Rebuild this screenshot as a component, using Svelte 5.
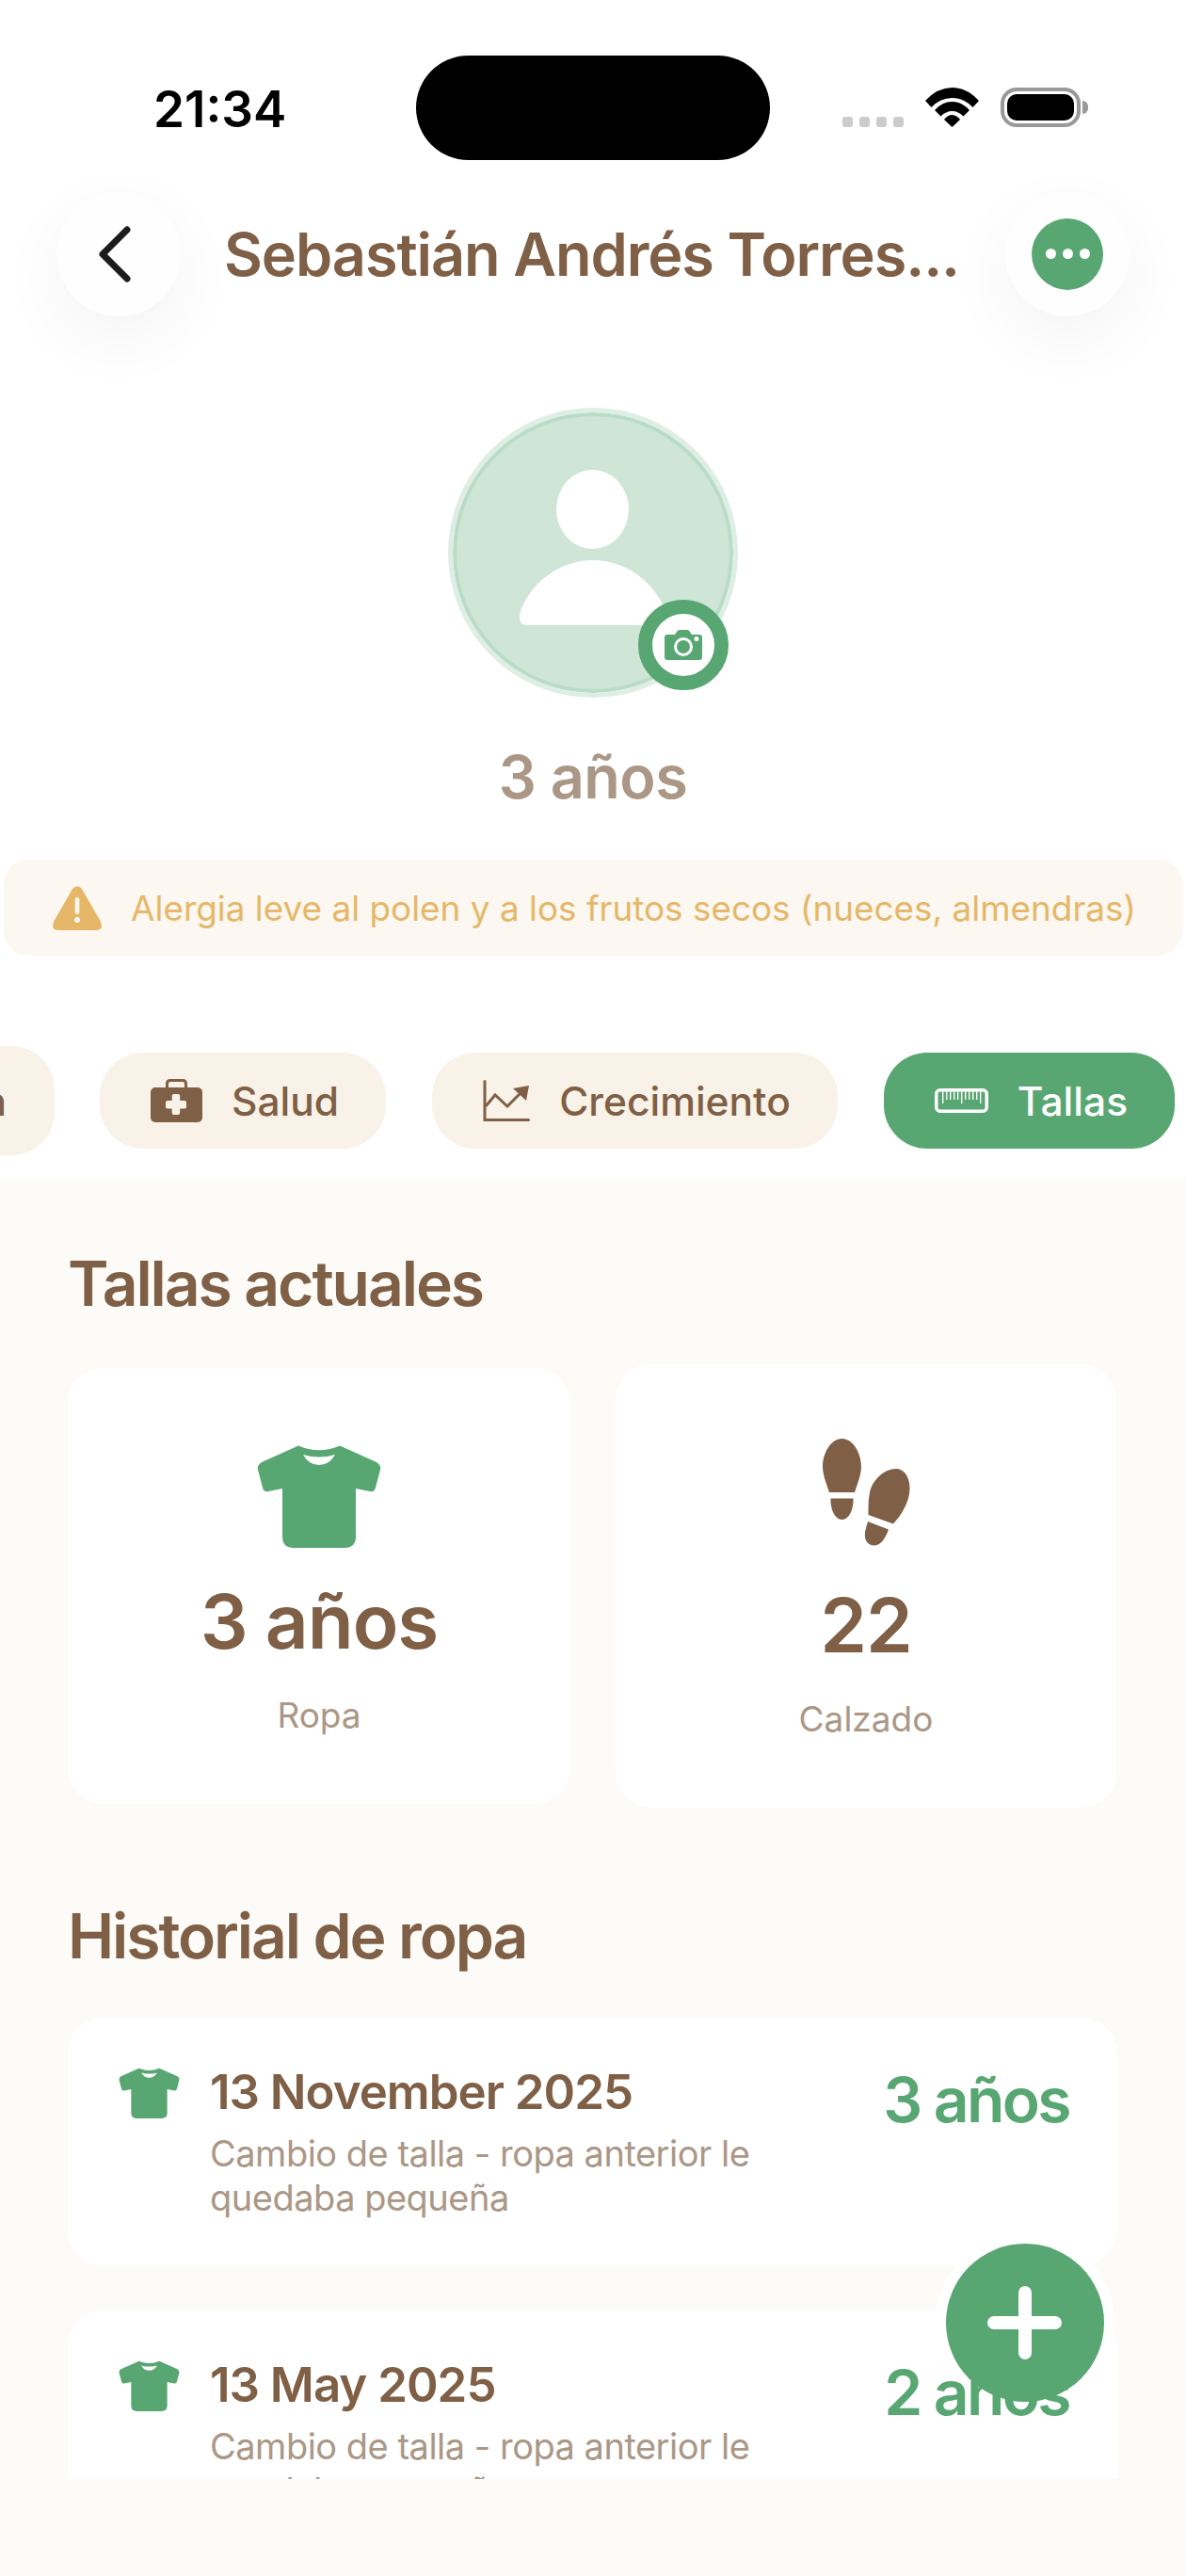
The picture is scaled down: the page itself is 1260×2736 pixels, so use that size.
<script>
    const tabs = [
        { label: 'Salud', icon: 'salud' },
        { label: 'Crecimiento', icon: 'chart' },
        { label: 'Tallas', icon: 'ruler', active: true }
    ];

    const history = [
        { date: '13 November 2025', note: 'Cambio de talla - ropa anterior le quedaba pequeña', size: '3 años' },
        { date: '13 May 2025', note: 'Cambio de talla - ropa anterior le quedaba pequeña', size: '2 años' }
    ];

    const ticks = [0, 1, 2, 3, 4, 5, 6, 7, 8, 9, 10];
</script>

{#snippet shirt(w, h)}
    <svg class="shirt" width={w} height={h} viewBox="33 20 132 112">
        <path fill="#58a672" d="M77 23.500Q99 33 121 23.500L160 41Q165 44 164 49L159 68Q158 73 153 72L138 69V120Q138 132 126 132H72Q60 132 60 120V69L45 72Q40 73 39 68L34 49Q33 44 38 41Z" />
        <path fill="#fff" d="M82 33Q99 38 116 33Q110 44 99 44Q88 44 82 33Z" />
    </svg>
{/snippet}

<main>
    <header class="status">
        <span class="time">21:34</span>
        <div class="island"></div>
        <div class="indicators">
            <div class="signal"><i></i><i></i><i></i><i></i></div>
            <svg class="wifi" width="57" height="42" viewBox="0 0 57 42">
                <path d="M0 14Q13 0 28.500 0Q44 0 57 14L50.500 21Q41 11 28.500 11Q16 11 6.500 21Z" />
                <path d="M10 24Q18 15 28.500 15Q39 15 47 24L40.500 30.500Q35 25 28.500 25Q22 25 16.500 30.500Z" />
                <path d="M20 34Q24 29 28.500 29Q33 29 37 34L28.500 42Z" />
            </svg>
            <div class="battery"><div class="level"></div></div>
            <div class="nub"></div>
        </div>
    </header>

    <nav class="topbar">
        <button class="round" aria-label="Volver">
            <svg width="36" height="60" viewBox="0 0 36 60">
                <path d="M32 4 6 30l26 26" fill="none" stroke="#1c1c1c" stroke-width="7" stroke-linecap="round" stroke-linejoin="round" />
            </svg>
        </button>
        <h1>Sebastián Andrés Torres...</h1>
        <button class="round" aria-label="Más">
            <span class="more"><i></i><i></i><i></i></span>
        </button>
    </nav>

    <section class="profile">
        <div class="avatar">
            <svg width="156" height="165" viewBox="0 0 156 165">
                <ellipse cx="77.500" cy="42" rx="38.500" ry="42" fill="#fff" />
                <path fill="#fff" d="M8 165Q0 165 0 157Q0 150 4 143C18 115 46 96 78 96C110 96 138 115 152 143Q156 150 156 157Q156 165 148 165Z" />
            </svg>
            <div class="badge">
                <svg width="40" height="32" viewBox="0 0 40 32">
                    <path fill="#58a672" fill-rule="evenodd" d="M3 5H11L13 2Q14 0 16 0H24Q26 0 27 2L29 5H37Q40 5 40 8V29Q40 32 37 32H3Q0 32 0 29V8Q0 5 3 5ZM20 8A10 10 0 1 0 20 28A10 10 0 1 0 20 8ZM20 11A7 7 0 1 1 20 25A7 7 0 1 1 20 11ZM34 7A2.500 2.500 0 1 0 34 12A2.500 2.500 0 1 0 34 7Z" />
                </svg>
            </div>
        </div>
        <p class="age">3 años</p>
    </section>

    <aside class="alert">
        <svg width="52" height="47" viewBox="0 0 52 47">
            <path fill="#e6b768" d="M21 3Q26 -2.500 31 3L50.500 37Q55 47 46 47H6Q-3 47 1.500 37Z" />
            <rect x="23.700" y="12" width="4.600" height="18" rx="2.300" fill="#fcf8f1" />
            <circle cx="26" cy="36" r="3" fill="#fcf8f1" />
        </svg>
        <span>Alergia leve al polen y a los frutos secos (nueces, almendras)</span>
    </aside>

    <div class="tabs">
        <div class="tab partial"><span>Información</span></div>
        {#each tabs as tab}
            <div class="tab" class:active={tab.active}>
                {#if tab.icon === 'salud'}
                    <svg width="55" height="46" viewBox="0 0 55 46">
                        <path fill="none" stroke="#7f5f45" stroke-width="3" d="M17.500 10V5Q17.500 1.500 21 1.500H34Q37.500 1.500 37.500 5V10" />
                        <rect y="9" width="55" height="37" rx="5" fill="#7f5f45" />
                        <rect x="16" y="23" width="22" height="8.500" rx="2" fill="#f9f2e8" />
                        <rect x="22.700" y="16" width="8.500" height="22" rx="2" fill="#f9f2e8" />
                    </svg>
                {:else if tab.icon === 'chart'}
                    <svg width="50" height="44" viewBox="0 0 50 44">
                        <path fill="none" stroke="#7f5f45" stroke-width="3" stroke-linecap="round" d="M2 1.500V42.500H48.500" />
                        <path fill="none" stroke="#7f5f45" stroke-width="3" d="M3 28 13 16 26 28 39 15" />
                        <path fill="#7f5f45" d="M32 9 49 6 46 22Z" />
                    </svg>
                {:else}
                    <svg width="57" height="26" viewBox="0 0 57 26">
                        <rect x="1.750" y="1.750" width="53.500" height="22.500" rx="4" fill="none" stroke="#fff" stroke-width="3.500" />
                        {#each ticks as t}
                            <rect x={8 + t * 4} y="3" width="1.400" height={t % 5 === 0 ? 13 : 9} fill="#fff" />
                        {/each}
                    </svg>
                {/if}
                <span>{tab.label}</span>
            </div>
        {/each}
    </div>

    <div class="content">
        <div class="scroll">
            <h2>Tallas actuales</h2>
            <div class="current">
                <div class="size-card ropa">
                    <div class="icon-box">{@render shirt(132, 112)}</div>
                    <strong>3 años</strong>
                    <span>Ropa</span>
                </div>
                <div class="size-card calzado">
                    <div class="icon-box">
                        <svg width="93" height="114" viewBox="35 20 93 114" fill="#7f5f45">
                            <path d="M55.500 20C44 20 35 35 35 50C35 58 39 68 42 77H69C72 68 76 58 76 50C76 35 67 20 55.500 20Z" />
                            <path d="M43.500 83.500H67.500C68 95 63 106 55.500 106C48 106 43 95 43.500 83.500Z" />
                            <path d="M83.500 101 110 110.500C118 102 127 88 127.500 74C128 62 122 52 113 52C100 52 88 64 85 77C83.500 85 83.500 93 83.500 101Z" />
                            <path d="M83 108 105 116.500C102 125 97 133.500 90 133.500C83 133.500 79 128 80 120C80.500 116 82 112 83 108Z" />
                        </svg>
                    </div>
                    <strong>22</strong>
                    <span>Calzado</span>
                </div>
            </div>

            <h2 class="second">Historial de ropa</h2>
            {#each history as item}
                <article>
                    <div class="row-icon">{@render shirt(65, 55)}</div>
                    <div class="row-text">
                        <h3>{item.date}</h3>
                        <p>{item.note}</p>
                    </div>
                    <b>{item.size}</b>
                </article>
            {/each}
        </div>
    </div>

    <!-- white ring sits above the card backgrounds but below the card text -->
    <div class="fab-halo"></div>
    <button class="fab" aria-label="Añadir"></button>
</main>

<style>
    :global(body) {
        background: #fff;
    }

    main {
        position: relative;
        display: flex;
        flex-direction: column;
        width: 1260px;
        height: 2736px;
        overflow: hidden;
        background: #fff;
        font-family: Inter, "Liberation Sans", sans-serif;
        color: #7f5f45;
    }

    .status {
        flex: none;
        display: flex;
        align-items: flex-start;
        height: 203px;
        box-sizing: border-box;
        padding: 59px 0 0 163px;
    }

    .time {
        width: 279px;
        margin-top: 27px;
        font-size: 53px;
        line-height: 60px;
        font-weight: 600;
        color: #000;
    }

    .island {
        width: 376px;
        height: 111px;
        border-radius: 56px;
        background: #000;
    }

    .indicators {
        display: flex;
        align-items: flex-start;
        margin: 34px 0 0 77px;
    }

    .signal {
        display: flex;
        gap: 7px;
        margin-top: 31px;
    }

    .signal i {
        width: 11px;
        height: 11px;
        border-radius: 3px;
        background: #ccc;
    }

    .wifi {
        margin-left: 23px;
    }

    .battery {
        box-sizing: border-box;
        width: 85px;
        height: 42px;
        margin-left: 23px;
        padding: 3px;
        border: 4px solid #999;
        border-radius: 17px;
    }

    .level {
        height: 100%;
        border-radius: 10px;
        background: #000;
    }

    .nub {
        width: 6px;
        height: 14px;
        margin: 14px 0 0 2px;
        border-radius: 0 6px 6px 0;
        background: #999;
    }

    .topbar {
        flex: none;
        display: flex;
        align-items: center;
        height: 133px;
        padding: 0 60px;
    }

    .round {
        flex: none;
        display: flex;
        align-items: center;
        justify-content: center;
        width: 132px;
        height: 132px;
        padding: 0;
        border: 0;
        border-radius: 50%;
        background: #fefefe;
        box-shadow: 0 24px 72px rgba(0, 0, 0, 0.05);
    }

    .round svg {
        margin-left: -10px;
    }

    h1 {
        flex: 1;
        margin: 0 0 0 46px;
        font-size: 63px;
        line-height: 76px;
        font-weight: 600;
        letter-spacing: -1.100px;
        white-space: nowrap;
    }

    .more {
        display: flex;
        align-items: center;
        justify-content: center;
        gap: 7px;
        width: 76px;
        height: 76px;
        border-radius: 50%;
        background: #58a672;
    }

    .more i {
        width: 11px;
        height: 11px;
        border-radius: 50%;
        background: #fff;
    }

    .profile {
        flex: none;
        display: flex;
        flex-direction: column;
        align-items: center;
        padding-top: 102px;
    }

    .avatar {
        position: relative;
        box-sizing: border-box;
        display: flex;
        justify-content: center;
        width: 298px;
        height: 298px;
        padding-top: 57px;
        border: 4px solid #b9dcc6;
        outline: 5px solid #dfeee5;
        border-radius: 50%;
        background: #cfe5d6;
    }

    .badge {
        position: absolute;
        left: 193px;
        top: 195px;
        display: flex;
        align-items: center;
        justify-content: center;
        width: 66px;
        height: 66px;
        border: 15px solid #58a672;
        border-radius: 50%;
        background: #fff;
    }

    .age {
        margin: 51px 0 0;
        font-size: 63px;
        line-height: 76px;
        font-weight: 600;
        letter-spacing: -0.500px;
        color: #ab9786;
    }

    .alert {
        flex: none;
        display: flex;
        align-items: center;
        gap: 31px;
        height: 102px;
        margin: 50px 4px 0;
        padding: 0 0 0 52px;
        box-sizing: border-box;
        border-radius: 26px;
        background: #fcf8f1;
        font-size: 36.900px;
        color: #e6b768;
    }

    .tabs {
        flex: none;
        display: flex;
        align-items: flex-start;
        gap: 49px;
        box-sizing: border-box;
        height: 236px;
        padding: 103px 0 0 106px;
    }

    .tab {
        flex: none;
        display: flex;
        align-items: center;
        gap: 31px;
        height: 102px;
        padding: 0 50px 0 54px;
        border-radius: 46px;
        background: #f9f2e8;
        font-size: 42.500px;
        font-weight: 500;
    }

    .tab.active {
        background: #58a672;
        color: #fff;
    }

    .tab.partial {
        position: absolute;
        right: calc(100% - 58px);
        height: 116px;
        margin-top: -7px;
        padding: 0 51px 0 0;
    }

    .content {
        flex: 1;
        background: #fcfbf7;
    }

    .scroll {
        height: 1382px;
        box-sizing: border-box;
        padding: 76px 73px 0 72px;
        overflow: hidden;
    }

    h2 {
        margin: 0;
        font-size: 66px;
        line-height: 72px;
        font-weight: 600;
        letter-spacing: -2.100px;
    }

    .current {
        display: grid;
        grid-template-columns: 534px 532px;
        gap: 48px;
        align-items: center;
        margin-top: 50px;
    }

    .size-card {
        display: flex;
        flex-direction: column;
        align-items: center;
        box-sizing: border-box;
        padding: 79px 0 0;
        border-radius: 38px;
        background: #fff;
    }

    .ropa {
        height: 463px;
    }

    .calzado {
        height: 471px;
    }

    .icon-box {
        display: flex;
        align-items: flex-start;
    }

    .ropa .icon-box {
        height: 141px;
    }

    .calzado .icon-box {
        height: 149px;
    }

    .size-card strong {
        font-size: 80px;
        line-height: 98px;
        font-weight: 600;
        letter-spacing: -1px;
    }

    .size-card span {
        margin-top: 29px;
        font-size: 37px;
        line-height: 44px;
        color: #ab9786;
    }

    .second {
        margin-top: 100px;
    }

    article {
        display: flex;
        align-items: flex-start;
        min-height: 263px;
        box-sizing: border-box;
        margin-top: 48px;
        padding: 52px 51px 0 54px;
        border-radius: 38px;
        background: #fff;
    }

    .second + article {
        margin-top: 51px;
    }

    .row-icon {
        flex: none;
        width: 97px;
        height: 55px;
    }

    .row-text {
        position: relative;
        z-index: 1;
        width: 640px;
        margin-top: -4px;
    }

    h3 {
        margin: 0;
        font-size: 51px;
        line-height: 62px;
        font-weight: 600;
        letter-spacing: -1px;
    }

    article p {
        margin: 11px 0 0;
        font-size: 38px;
        line-height: 47px;
        letter-spacing: -0.500px;
        color: #ab9786;
    }

    article b {
        position: relative;
        z-index: 1;
        margin: -5px 0 0 auto;
        font-size: 66px;
        line-height: 80px;
        font-weight: 600;
        letter-spacing: -2.600px;
        color: #58a672;
    }

    .fab-halo {
        position: absolute;
        left: 994px;
        top: 2372px;
        width: 190px;
        height: 190px;
        border-radius: 50%;
        background: #fff;
    }

    .fab {
        position: absolute;
        z-index: 2;
        left: 1005px;
        top: 2383px;
        width: 168px;
        height: 168px;
        padding: 0;
        border: 0;
        border-radius: 50%;
        background: #58a672;
    }

    .fab::before,
    .fab::after {
        content: "";
        position: absolute;
        border-radius: 7px;
        background: #fff;
    }

    .fab::before {
        left: 44px;
        top: 77px;
        width: 79px;
        height: 14px;
    }

    .fab::after {
        left: 77px;
        top: 45px;
        width: 14px;
        height: 78px;
    }
</style>
